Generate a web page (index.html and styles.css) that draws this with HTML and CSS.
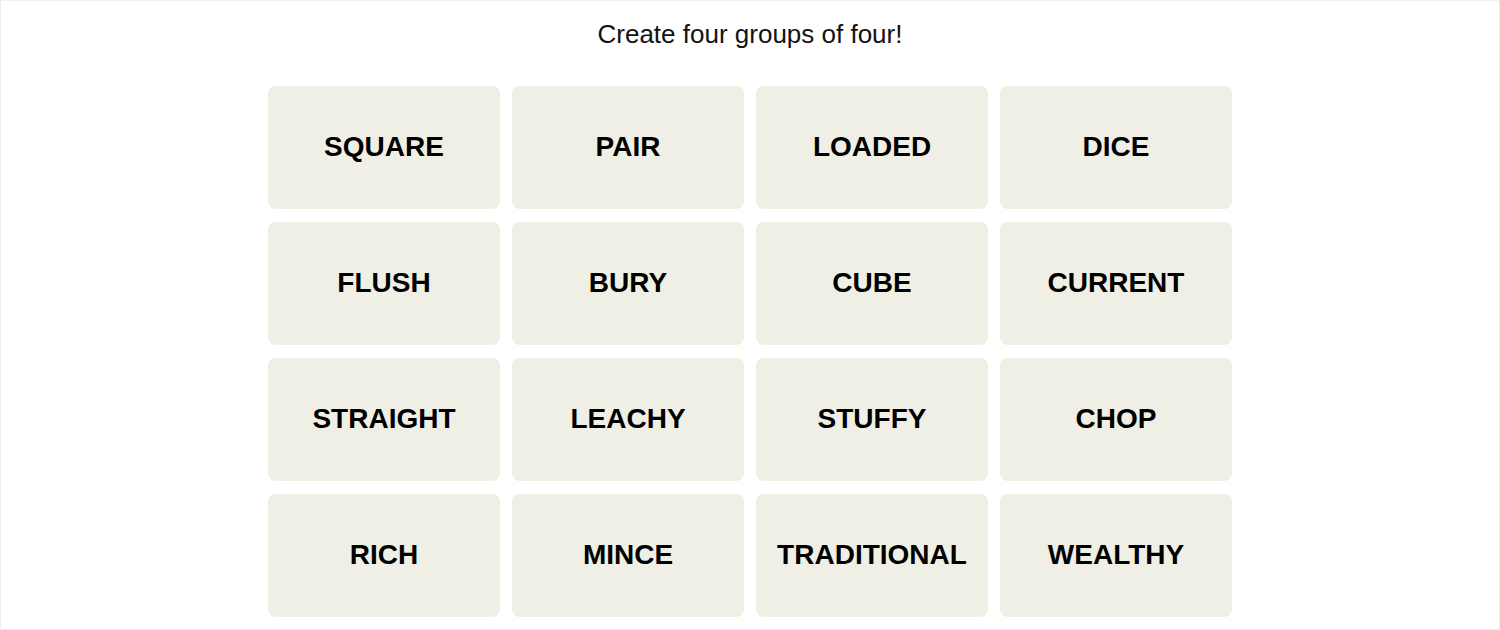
FILE: index.html
```html
<!DOCTYPE html>
<html lang="en">
<head>
    <meta charset="UTF-8">
    <meta name="viewport" content="width=device-width, initial-scale=1.0">
    <title>Connections</title>
    <link rel="stylesheet" href="styles.css">
</head>
<body>
    <div id="board">
        <p id="prompt">Create four groups of four!</p>

        <div id="grid">
            <button class="tile">SQUARE</button>
            <button class="tile">PAIR</button>
            <button class="tile">LOADED</button>
            <button class="tile">DICE</button>

            <button class="tile">FLUSH</button>
            <button class="tile">BURY</button>
            <button class="tile">CUBE</button>
            <button class="tile">CURRENT</button>

            <button class="tile">STRAIGHT</button>
            <button class="tile">LEACHY</button>
            <button class="tile">STUFFY</button>
            <button class="tile">CHOP</button>

            <button class="tile">RICH</button>
            <button class="tile">MINCE</button>
            <button class="tile">TRADITIONAL</button>
            <button class="tile">WEALTHY</button>
        </div>
    </div>
</body>
</html>
```

FILE: styles.css
```css
/* Reset */
* { margin: 0; padding: 0; box-sizing: border-box; font-family: "Liberation Sans", Arial, sans-serif; }
body { background-color: #fff; color: #000; }

/* Board */
#board {
    width: 1500px;
    height: 630px;
    border: 1px solid #f0f0f0;
    display: flex;
    flex-direction: column;
    align-items: center;
}

#prompt {
    font-size: 26px;
    line-height: 30px;
    margin-top: 18px;
    margin-bottom: 37px;
    color: #121212;
}

/* Grid of words */
#grid {
    display: grid;
    grid-template-columns: repeat(4, 232px);
    grid-auto-rows: 123px;
    gap: 13px 12px;
}

.tile {
    background-color: #efefe6;
    border: none;
    border-radius: 8px;
    padding-bottom: 2px;
    font-size: 28px;
    font-weight: bold;
    color: #000;
    cursor: pointer;
}
```
